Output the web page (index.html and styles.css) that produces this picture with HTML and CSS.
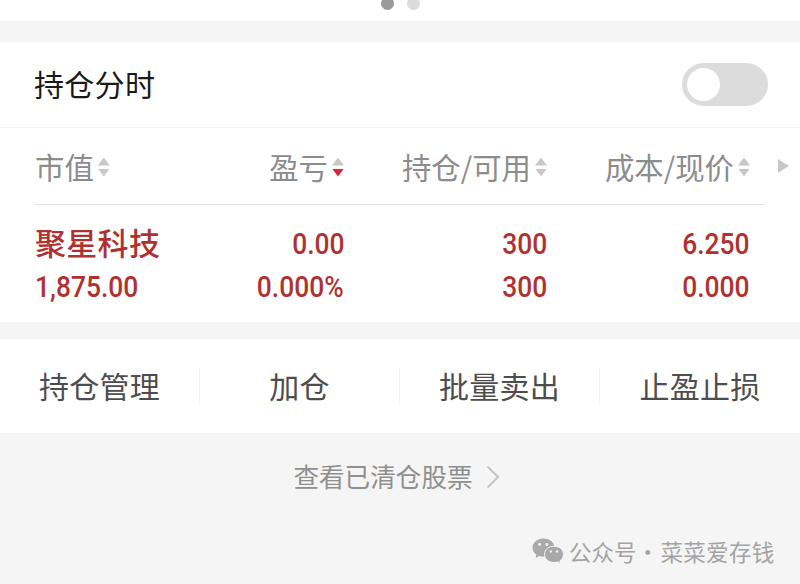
FILE: index.html
```html
<!DOCTYPE html>
<html lang="zh-CN">

<head>

  <meta charset="UTF-8">
  <meta name="viewport" content="width=device-width, initial-scale=1.0">

  <title>持仓</title>

  <link rel="stylesheet" href="styles.css">

</head>

<body>

  <div class="pager">
    <span class="dot active"></span>
    <span class="dot"></span>
  </div>

  <section class="positions">
    <header class="title_bar">
      <h1>持仓分时</h1>
      <button class="switch" aria-label="持仓分时"></button>
    </header>

    <div class="row columns">
      <span class="col">市值<i class="sort"></i></span>
      <span class="col">盈亏<i class="sort desc"></i></span>
      <span class="col">持仓/可用<i class="sort"></i></span>
      <span class="col">成本/现价<i class="sort"></i></span>
      <i class="more"></i>
    </div>

    <div class="row stock">
      <div class="cell">
        <b class="name">聚星科技</b>
        <span class="num">1,875.00</span>
      </div>
      <div class="cell">
        <span class="num">0.00</span>
        <span class="num">0.000%</span>
      </div>
      <div class="cell">
        <span class="num">300</span>
        <span class="num">300</span>
      </div>
      <div class="cell">
        <span class="num">6.250</span>
        <span class="num">0.000</span>
      </div>
    </div>
  </section>

  <nav class="actions">
    <a>持仓管理</a>
    <a>加仓</a>
    <a>批量卖出</a>
    <a>止盈止损</a>
  </nav>

  <a class="history">
    <span>查看已清仓股票</span>
    <svg width="14" height="24" viewBox="0 0 14 24">
      <path d="M1.500 1.500L12 12L1.500 22.500" fill="none" stroke="#c4c4c4" stroke-width="2"/>
    </svg>
  </a>

  <footer class="account">
    <svg width="32" height="26" viewBox="0 0 32 26">
      <path fill="#a9a9a9" d="M11.500 0.500C5.300.5.5 4.600.5 9.800c0 2.900 1.500 5.300 3.900 7L3.500 20l3.600-1.900c1.400.4 2.800.6 4.400.6C17.600 18.700 22.500 14.800 22.500 9.600S17.600.5 11.500.5z"/>
      <path fill="#a9a9a9" stroke="#f5f5f5" stroke-width="1" d="M22 8.200c-5.300 0-9.500 3.500-9.500 8.100s4.200 8.200 9.500 8.200c1.200 0 2.400-.2 3.500-.5l3.100 1.700-.8-2.800c2.200-1.500 3.700-3.800 3.700-6.600 0-4.600-4.200-8.100-9.500-8.100z"/>
      <g fill="#f5f5f5">
        <circle cx="7.700" cy="6.500" r="1.400"/>
        <circle cx="14.800" cy="6.500" r="1.400"/>
        <circle cx="18.800" cy="13.500" r="1.200"/>
        <circle cx="25" cy="13.500" r="1.200"/>
      </g>
    </svg>
    <span class="kind">公众号</span>
    <span class="sep">·</span>
    <span class="owner">菜菜爱存钱</span>
  </footer>

</body>

</html>
```

FILE: styles.css
```css
* {
  box-sizing: border-box;
}
body {
  margin: 0;
  height: 584px;
  overflow: hidden;
  background-color: #f5f5f5;
  font-family: "Noto Sans CJK SC", sans-serif;
}
.pager {
  display: flex;
  justify-content: center;
  gap: 13px;
  height: 21px;
  background-color: #fff;
}
.dot {
  width: 13px;
  height: 13px;
  margin-top: -3px;
  border-radius: 50%;
  background-color: #dcdcdc;
}
.dot.active {
  background-color: #999;
}
.positions {
  margin-top: 21px;
  height: 280px;
  background-color: #fff;
}
.title_bar {
  display: flex;
  justify-content: space-between;
  align-items: center;
  height: 86px;
  padding: 0 32px 0 34px;
  border-bottom: 1px solid #f3f3f3;
}
h1 {
  margin: 0;
  padding-bottom: 3px;
  font-size: 30px;
  font-weight: 400;
  line-height: 44px;
  letter-spacing: 0.3px;
  color: #1a1a1a;
}
.switch {
  width: 86px;
  height: 43px;
  padding: 5px;
  border: 0;
  border-radius: 22px;
  background-color: #dcdcdc;
}
.switch::before {
  content: "";
  display: block;
  width: 33px;
  height: 33px;
  border-radius: 50%;
  background-color: #fff;
}
.row {
  display: grid;
  grid-template-columns: 134px 175px 203px 203px 1fr;
  padding-left: 35px;
}
.columns {
  align-items: center;
  height: 77px;
  padding-bottom: 1px;
  background: linear-gradient(#e6e6e6, #e6e6e6) 34px 100% / 731px 1px no-repeat;
}
.col {
  display: flex;
  justify-content: flex-end;
  align-items: center;
  font-size: 29.4px;
  line-height: 38px;
  color: #8c8c8c;
}
.col:first-child {
  justify-content: flex-start;
}
.sort {
  display: grid;
  gap: 3px;
  margin: 2px 0 0 4px;
}
.sort::before, .sort::after {
  content: "";
  width: 12px;
  height: 8px;
  background-color: #c8c8c8;
  clip-path: polygon(50% 0, 100% 100%, 0 100%);
}
.sort::after {
  clip-path: polygon(0 0, 100% 0, 50% 100%);
}
.sort.desc::after {
  background-color: #dc2338;
}
.more {
  width: 11px;
  height: 14px;
  margin-left: 28px;
  background-color: #c8c8c8;
  clip-path: polygon(0 0, 100% 50%, 0 100%);
}
.stock {
  padding-top: 17px;
  color: #b03230;
}
.cell {
  display: grid;
  grid-template-rows: 43px 43px;
  align-items: center;
  justify-items: end;
}
.cell:first-child {
  justify-items: start;
}
.name {
  padding-bottom: 4px;
  font-size: 31px;
  font-weight: 500;
  line-height: 39px;
  letter-spacing: 0.3px;
  white-space: nowrap;
}
.num {
  font-family: Roboto, sans-serif;
  font-size: 30px;
  font-weight: 500;
  line-height: 43px;
  transform: scaleX(0.88);
  transform-origin: right;
}
.cell:first-child .num {
  transform-origin: left;
}
.actions {
  display: grid;
  grid-template-columns: repeat(4, 1fr);
  align-items: center;
  height: 94px;
  margin-top: 17px;
  background-color: #fff;
}
.actions a {
  height: 34px;
  border-right: 1px solid #f0f0f0;
  font-size: 30px;
  line-height: 32px;
  letter-spacing: 0.3px;
  text-align: center;
  color: #4d4d4d;
}
.actions a:last-child {
  border-right: 0;
}
.history {
  display: flex;
  justify-content: center;
  align-items: center;
  gap: 13px;
  height: 88px;
  padding-right: 7px;
  font-size: 25.6px;
  color: #8f8f8f;
}
.history span {
  padding-bottom: 4px;
}
.account {
  display: flex;
  align-items: center;
  height: 34px;
  margin-top: 13px;
  padding-left: 532px;
  font-size: 22.5px;
  color: #a3a3a3;
  white-space: nowrap;
}
.kind {
  margin-left: 5px;
}
.sep {
  width: 22px;
  text-align: center;
}
.owner {
  margin-left: 2px;
  letter-spacing: 0.3px;
}
```
